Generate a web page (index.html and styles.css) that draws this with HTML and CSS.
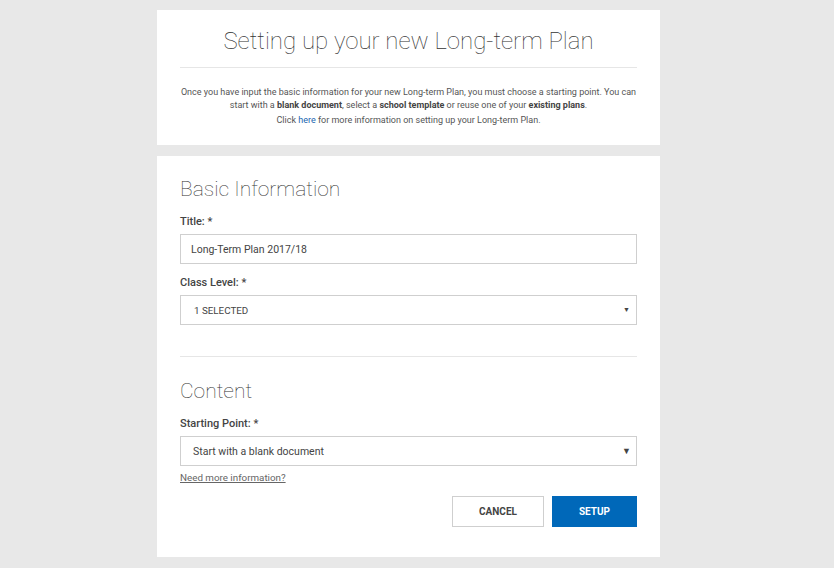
FILE: index.html
```html
<!DOCTYPE html>
<html>
<head>
<meta charset="utf-8">
<link rel="stylesheet" href="styles.css">
</head>
<body>
<div class="page">
  <section class="card intro">
    <h1 class="title">Setting up your new Long-term Plan</h1>
    <hr class="rule">
    <p class="lead">Once you have input the basic information for your new Long-term Plan, you must choose a starting point. You can start with a <b>blank document</b>, select a <b>school template</b> or reuse one of your <b>existing plans</b>.</p>
    <p class="lead small-gap">Click <a class="link" href="#">here</a> for more information on setting up your Long-term Plan.</p>
  </section>
  <section class="card form">
    <h2 class="section-title">Basic Information</h2>
    <label class="label first">Title: *</label>
    <div class="field text-field">Long-Term Plan 2017/18</div>
    <label class="label">Class Level: *</label>
    <div class="field select-field upper"><span>1 SELECTED</span><span class="caret small">&#9660;</span></div>
    <hr class="rule section-rule">
    <h2 class="section-title">Content</h2>
    <label class="label first">Starting Point: *</label>
    <div class="field select-field start"><span>Start with a blank document</span><span class="caret">&#9660;</span></div>
    <a class="more" href="#">Need more information?</a>
    <div class="actions">
      <button class="btn cancel">CANCEL</button>
      <button class="btn setup">SETUP</button>
    </div>
  </section>
</div>
</body>
</html>
```
FILE: styles.css
```css
html, body {
  margin: 0;
  padding: 0;
  background: #e8e8e8;
  font-family: Roboto, "Liberation Sans", Arial, sans-serif;
  color: #444;
}
.page {
  width: 503px;
  margin: 10px 0 0 157px;
  display: flex;
  flex-direction: column;
  gap: 11px;
}
.card {
  background: #fff;
  padding: 0 23px;
}
.intro {
  height: 135px;
  box-sizing: border-box;
  padding-top: 16px;
}
.title {
  margin: 0;
  font-family: Roboto, sans-serif;
  font-weight: 100;
  font-size: 24px;
  line-height: 30px;
  text-align: center;
  color: #333;
}
.rule {
  border: 0;
  border-top: 1px solid #e6e6e6;
  margin: 11px 0 0;
}
.lead {
  margin: 18px 0 0;
  font-size: 9px;
  line-height: 13px;
  text-align: center;
  color: #555;
}
.lead b { font-weight: 700; color: #444; }
.small-gap { margin-top: 2px; }
.link { color: #1a65b0; text-decoration: none; }
.form {
  height: 401px;
  box-sizing: border-box;
  padding-top: 21px;
}
.section-title {
  margin: 0;
  font-family: Roboto, sans-serif;
  font-weight: 100;
  font-size: 21px;
  line-height: 24px;
  color: #333;
}
.label {
  display: block;
  margin-top: 12px;
  font-size: 11px;
  font-weight: 500;
  line-height: 14px;
  color: #444;
}
.label.first { margin-top: 14px; }
.field {
  margin-top: 5px;
  height: 30px;
  box-sizing: border-box;
  border: 1px solid #cfcfcf;
  display: flex;
  align-items: center;
  font-size: 10.5px;
  color: #444;
  padding: 0 10px;
}
.select-field { justify-content: space-between; padding-right: 6px; }
.upper { font-size: 9.8px; padding-left: 13px; }
.start { padding-left: 12px; padding-right: 5px; }
.caret { font-size: 9px; color: #444; }
.caret.small { font-size: 7px; }
.section-rule { margin-top: 31px; }
.form .section-rule + .section-title { margin-top: 22px; }
.more {
  display: inline-block;
  margin-top: 5px;
  font-size: 9.8px;
  color: #666;
  text-decoration: underline;
}
.actions {
  display: flex;
  justify-content: flex-end;
  gap: 8px;
  margin-top: 11px;
}
.btn {
  height: 31px;
  font-family: Roboto, "Liberation Sans", Arial, sans-serif;
  font-size: 10px;
  font-weight: 700;
  border-radius: 0;
  cursor: pointer;
}
.cancel {
  width: 92px;
  background: #fff;
  border: 1px solid #cfcfcf;
  color: #444;
}
.setup {
  width: 85px;
  background: #0068b9;
  border: 1px solid #0068b9;
  color: #fff;
}
```
